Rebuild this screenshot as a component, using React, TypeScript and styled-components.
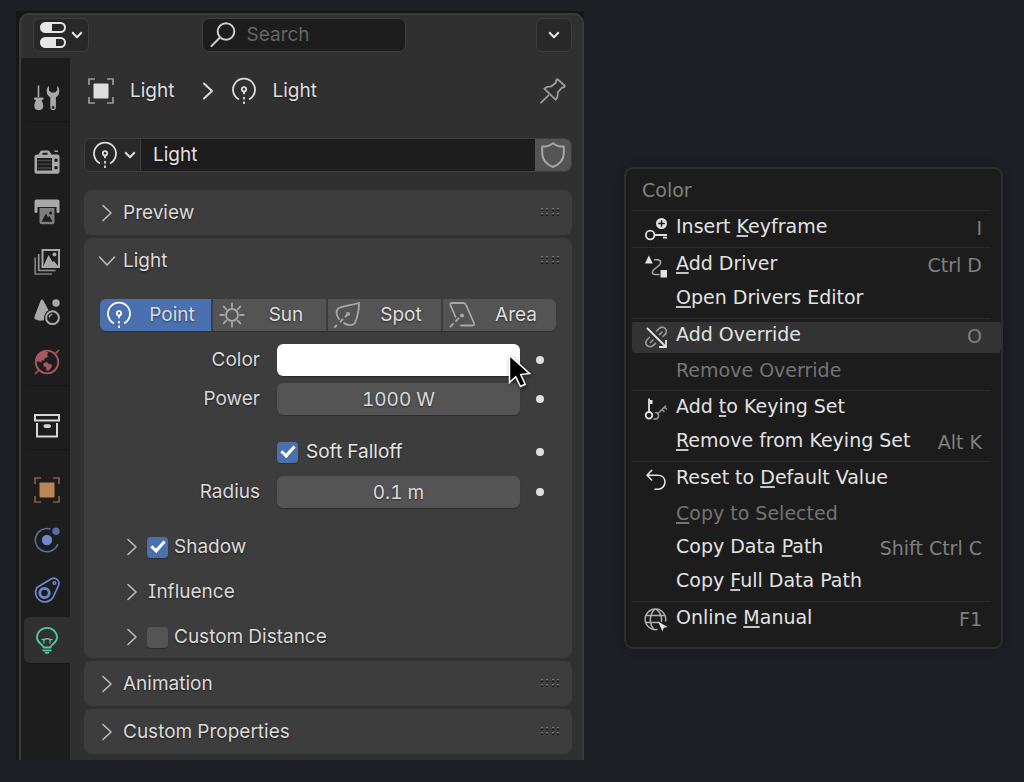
import React from "react";
import styled, { createGlobalStyle, css } from "styled-components";

const GlobalStyle = createGlobalStyle`
  *, *::before, *::after { box-sizing: border-box; }
  body {
    margin: 0;
    background: #1e1f24;
    color: #d9d9d9;
    font: 400 19px/24px Inter, "Liberation Sans", sans-serif;
    font-feature-settings: "cv08", "tnum";
  }
  button, input { font: inherit; font-feature-settings: inherit; color: inherit; margin: 0; }
  svg { display: block; flex: none; overflow: visible; }
`;

/* ---------- icons ---------- */

type IconProps = { w: number; h: number; children: React.ReactNode; sw?: number };

const Icon = ({ w, h, sw = 2, children }: IconProps) => (
  <svg
    width={w}
    height={h}
    viewBox={`0 0 ${w} ${h}`}
    fill="none"
    stroke="currentColor"
    strokeWidth={sw}
    strokeLinecap="round"
    strokeLinejoin="round"
    aria-hidden="true"
  >
    {children}
  </svg>
);

const filled = { fill: "currentColor", stroke: "none" };

const EditorIcon = () => (
  <Icon w={26} h={26}>
    <rect x="1" y="1" width="24" height="9" rx="4.5" />
    <path {...filled} d="M5.500 0.500H12V10.500H5.500A5 5 0 0 1 5.500 0.500Z" />
    <rect x="1" y="16" width="24" height="9" rx="4.5" />
    <path {...filled} d="M5.500 15.500H16V25.500H5.500A5 5 0 0 1 5.500 15.500Z" />
  </Icon>
);
const CaretIcon = () => (
  <Icon w={12} h={8}>
    <path d="M1.200 1.300L6 6.300L10.800 1.300" strokeLinecap="butt" />
  </Icon>
);
const SearchIcon = () => (
  <Icon w={26} h={26}>
    <circle cx="16" cy="9.500" r="8.300" />
    <path d="M10 15.500L1.500 24" />
  </Icon>
);
const RightIcon = ({ sw = 1.6 }: { sw?: number }) => (
  <Icon w={10} h={18} sw={sw}>
    <path d="M1 1.500L9 9L1 16.500" />
  </Icon>
);
const DownIcon = () => (
  <Icon w={16} h={10} sw={1.6}>
    <path d="M0.500 1L8 9L15.500 1" />
  </Icon>
);
const ObjectIcon = ({ frame = "#9a9a9a" }: { frame?: string }) => (
  <Icon w={26} h={26} sw={1.7}>
    <path
      stroke={frame}
      strokeLinecap="butt"
      strokeLinejoin="miter"
      d="M1 7V1H7M19 1H25V7M25 19V25H19M7 25H1V19"
    />
    <rect {...filled} x="5.500" y="5.500" width="15" height="15" rx="1" />
  </Icon>
);
const PointIcon = () => (
  <Icon w={24} h={28} sw={1.8}>
    <path d="M6.300 22A11 11 0 1 1 17.700 22" />
    <circle cx="12" cy="12.300" r="2.200" />
    <path d="M12 15V17.200M12 20V22.500M12 24.500V27" strokeLinecap="butt" />
  </Icon>
);
const SunIcon = () => (
  <Icon w={26} h={26} sw={1.8}>
    <circle cx="13" cy="13" r="6" />
    <path d="M13 5V1.300M13 21V24.700M5 13H1.300M21 13H24.700M7.300 7.300L4.700 4.700M18.700 7.300L21.300 4.700M7.300 18.700L4.700 21.300M18.700 18.700L21.300 21.300" />
  </Icon>
);
const SpotIcon = () => (
  <Icon w={26} h={26} sw={1.8}>
    <path d="M25 1C18 3 10 4 5 6C1.500 8 2 13 5 17M25 1C25 8 23 16 21 21C19 24 13 23.500 10 21" />
    <circle {...filled} cx="14" cy="12" r="2" />
    <path d="M13 13L11.500 14.500M8.500 17.500L6.500 19.500M2.500 23.500L0.800 25" />
  </Icon>
);
const AreaIcon = () => (
  <Icon w={26} h={26} sw={1.8}>
    <path d="M6.500 15L1.500 3C1 1.500 1.500 1 3 1H14C15.500 1 16.500 1.500 17 3L25 21C25.500 23 25 23.500 23 23.500H12" />
    <circle {...filled} cx="13" cy="13.500" r="2" />
    <path d="M9.500 16.500L7 19M4 22L1.500 24.500" />
  </Icon>
);
const PinIcon = () => (
  <Icon w={26} h={26} sw={1.8}>
    <path d="M17.500 1.200L24.700 7.500C24.800 9 23.500 9.500 22 9.600L17.600 14.500C18 18 17.500 20 15.500 21.700L4.300 10.700C6.500 8.500 9 8.300 11.500 8.300L16 4.500C16 3 16.500 1.500 17.500 1.200Z" />
    <path d="M8.500 17.300L1 24.700" />
  </Icon>
);
const ShieldIcon = () => (
  <Icon w={24} h={26}>
    <path d="M12 1.200C9 3.700 5.500 4.600 1.200 4.600V11C1.200 17.500 6 22.500 12 25C18 22.500 22.800 17.500 22.800 11V4.600C18.500 4.600 15 3.700 12 1.200Z" />
  </Icon>
);
const GripIcon = () => (
  <svg width="18" height="9" viewBox="0 0 18 9" aria-hidden="true">
    {[0, 5, 11, 16].map((x) => (
      <React.Fragment key={x}>
        <rect x={x} y="0" width="2" height="1" fill="#777" />
        <rect x={x} y="2" width="2" height="1" fill="#111" />
        <rect x={x} y="5" width="2" height="1" fill="#777" />
        <rect x={x} y="7" width="2" height="1" fill="#111" />
      </React.Fragment>
    ))}
  </svg>
);
const PointerIcon = () => (
  <svg width="24" height="34" viewBox="0 0 24 34" aria-hidden="true">
    <path
      d="M1.500 1.500V28.500L7.700 22.800L12.500 32.500L17.200 30.300L12.700 20.600L21.500 19.500Z"
      fill="#000"
      stroke="#fff"
      strokeWidth="1.500"
    />
  </svg>
);

const ToolIcon = () => (
  <Icon w={26} h={26}>
    <path d="M4.500 0.500V12" strokeWidth="1.600" strokeLinecap="butt" />
    <path {...filled} d="M1 12.500H8.500A1 1 0 0 1 8.500 14.800L7.500 15.500C9 18 9.500 20 9 22.500C8 26 1.500 26 0.500 22.500C0 20 0.500 18 2 15.500L1 14.800A1 1 0 0 1 1 12.500Z" />
    <path
      {...filled}
      fillRule="evenodd"
      d="M15 0.800C11.500 4 12 10 16.300 12.300V22.300A2.800 2.800 0 0 0 21.900 22.300V12.300C26 10 26.500 4 23.200 0.800V5.200L21 7.500H17.200L15 5.200ZM19.100 21A1.400 1.400 0 1 1 19.100 23.800A1.400 1.400 0 1 1 19.100 21Z"
    />
  </Icon>
);
const RenderIcon = () => (
  <Icon w={26} h={24}>
    <path
      {...filled}
      fillRule="evenodd"
      d="M0.500 7Q0.500 4.800 2.500 4.500H4.500L6.500 1.200Q7 0.500 8 0.500H14Q15 0.500 15.500 1.200L17.500 4.500H23.500Q25.500 4.500 25.500 7V22Q25.500 23.700 23.500 23.700H2.500Q0.500 23.700 0.500 22ZM8.500 2.700V4.700H13.500V2.700ZM3 8V20.500H18V8ZM22 8.500A1.800 1.800 0 1 0 22 12.100A1.800 1.800 0 1 0 22 8.500ZM22 16A1.800 1.800 0 1 0 22 19.600A1.800 1.800 0 1 0 22 16Z"
    />
    <path d="M4 10.500H17M4 14.200H17M4 18H17" strokeWidth="1.300" opacity="0.300" />
    <path d="M21 1.200H23.500" strokeWidth="1.400" />
  </Icon>
);
const OutputIcon = () => (
  <Icon w={26} h={26}>
    <path {...filled} d="M2.500 0.500H23.500Q25.500 0.500 25.500 2.500V13Q25.500 14 24 14Q22.500 14 22.500 13V8H3.500V13Q3.500 14 2 14Q0.500 14 0.500 13V2.500Q0.500 0.500 2.500 0.500Z" />
    <g opacity="0.700">
      <path {...filled} fillRule="evenodd" d="M5.500 9H20.500V23.500Q20.500 25.300 18.500 25.300H7.500Q5.500 25.300 5.500 23.500ZM7.500 22.800H18.500L15.500 17L14 18.500L12 14.500ZM16.700 12.500A1.500 1.500 0 1 0 16.700 15.500A1.500 1.500 0 1 0 16.700 12.500Z" />
    </g>
  </Icon>
);
const LayersIcon = () => (
  <Icon w={26} h={26} sw={1.700}>
    <g strokeLinecap="butt" strokeLinejoin="miter">
      <rect x="8.500" y="1" width="16.500" height="17" strokeWidth="2" />
      <path {...filled} d="M9.500 17L14.500 6L18.500 13L20 12L24 17Z" />
      <circle {...filled} cx="20.500" cy="5.500" r="2" />
      <path d="M4.700 5V21.500H21.500" opacity="0.850" />
      <path d="M1.200 8.500V25H18" opacity="0.700" />
    </g>
  </Icon>
);
const SceneIcon = () => (
  <Icon w={26} h={26}>
    <path {...filled} d="M8 0.500Q8.800 0.500 9.300 1.500L14.500 11Q10 14 10 19.500V21.300Q4 22.500 1 20Q0 19 0.500 17.500L6.700 1.500Q7.200 0.500 8 0.500Z" />
    <circle {...filled} cx="22" cy="4" r="3.700" />
    <circle cx="18.500" cy="18.700" r="6.400" />
    <path d="M15.300 17.700Q16 16 17.700 15.600" strokeWidth="1.500" />
  </Icon>
);
const WorldIcon = () => (
  <Icon w={26} h={26}>
    <circle cx="13" cy="13" r="11.300" strokeWidth="1.800" />
    <path d="M21.500 4.500L25 1M4.500 21.500L1 25" strokeLinecap="butt" strokeWidth="1.600" />
    <path {...filled} d="M2 9.500L6 3.700L10.500 1.800L14.300 3.500L13 6L14.500 7.500L10.500 9.500L10 11.500L7.500 11.500L7.500 13.500L5 12.500L2.500 12.500Z" />
    <path {...filled} d="M9.500 14L13 13L14 14.500L17.800 15.500L17.500 18.500L15 21.500L12 21.500L12.500 18.500L9.500 17Z" />
  </Icon>
);
const CollectionIcon = () => (
  <Icon w={26} h={26}>
    <g strokeLinejoin="miter">
      <rect x="1" y="2" width="24" height="5.500" />
      <path d="M3 10V23.500H23V10" strokeLinecap="butt" />
    </g>
    <rect {...filled} x="9.500" y="11.200" width="7.500" height="3.800" rx="1.900" />
  </Icon>
);
const PhysicsIcon = () => (
  <Icon w={26} h={26}>
    <g opacity="0.750">
      <path d="M16 1.900A11.600 11.600 0 1 0 23.700 17.500" strokeWidth="1.600" />
      <circle {...filled} cx="22" cy="4.200" r="3.700" />
    </g>
    <circle {...filled} cx="13" cy="13" r="5.200" />
  </Icon>
);
const ConstraintIcon = () => (
  <Icon w={26} h={26}>
    <path d="M3 10.500L17 2C21.500 -0.500 26.500 4 24.500 8.500L19 20.500A9.300 9.300 0 1 1 3 10.500Z" strokeWidth="1.700" />
    <circle cx="10.500" cy="16" r="4.700" strokeWidth="2.800" />
    <circle cx="20.500" cy="6" r="1.300" strokeWidth="1.500" />
  </Icon>
);
const DataIcon = () => (
  <Icon w={22} h={27}>
    <path d="M7.500 20.500C7 17 1 16.500 1 10.500A10 9.700 0 0 1 21 10.500C21 16.500 15 17 14.500 20.500Z" strokeWidth="1.800" />
    <path d="M8 16V12.500H6M14 16V12.500H16M8 12.500Q11 11 14 12.500" strokeWidth="1.300" />
    <path d="M6.500 23.500H15.500" strokeLinecap="butt" strokeWidth="1.800" />
    <path {...filled} d="M8.500 25H13.500L12.500 26.700H9.500Z" />
  </Icon>
);

const InsertKeyIcon = () => (
  <Icon w={22} h={23} sw={1.800}>
    <circle cx="5.200" cy="17" r="4.300" />
    <path d="M10 17H22M18 19.700H22" strokeLinecap="butt" />
    <circle {...filled} cx="16.500" cy="5.500" r="5.500" />
    <path d="M16.500 2.200V8.800M13.200 5.500H19.800" stroke="#1c1c1c" strokeWidth="1.500" strokeLinecap="butt" />
  </Icon>
);
const DriverIcon = () => (
  <Icon w={22} h={23} sw={1.500}>
    <path {...filled} d="M3.800 0.500L7.800 8.500H0Z" />
    <rect {...filled} x="15.500" y="15" width="6.500" height="7.500" />
    <path opacity="0.700" d="M9.500 4.800H12.500C16.500 5 16 8.500 14.500 10L8.500 15C6.500 17.500 7.500 19.500 10 19.500H14" />
  </Icon>
);
const OverrideIcon = () => (
  <Icon w={22} h={22} sw={1.800}>
    <g opacity="0.550" strokeWidth="1.700">
      <path d="M11.500 5L14.500 2.200Q17.500 0 20.200 2.500Q22.300 5 20.500 8L18 10.300" />
      <path d="M14.500 8.500L17 6.200" />
      <path d="M4.500 11.500L1.800 14Q-0.300 17 2 19.500Q4.500 21.700 7.500 20L10.500 17.500" />
      <path d="M5.500 16.500L8 14" />
    </g>
    <path d="M2 2L20.500 20.500M21 14V21H14" strokeLinecap="butt" strokeLinejoin="miter" />
  </Icon>
);
const KeyingIcon = () => (
  <Icon w={22} h={22} sw={1.800}>
    <circle cx="4" cy="17.300" r="3.300" />
    <path d="M4 14V0.500" strokeLinecap="butt" />
    <path {...filled} d="M4.500 2H7.500V6H4.500Z" />
    <g opacity="0.600" strokeWidth="1.600">
      <path d="M9 21C12 21.500 14 19.500 13.500 17C13 15 11.500 14.500 10.500 14.700" />
      <path d="M13 15.500L20.500 8M17 11.500L19 13.500M19.500 9L21.500 11" />
    </g>
  </Icon>
);
const ResetIcon = () => (
  <Icon w={22} h={22} sw={1.600}>
    <path d="M6.700 1.300L2 6.300L6.700 11M2 6.300H12.500C17.500 6.300 20 9.500 20 13C20 17 17 20.200 13 20.200H10" />
  </Icon>
);
const GlobeIcon = () => (
  <Icon w={22} h={22} sw={1.500}>
    <g opacity="0.750">
      <path d="M20.600 12A10.300 10.300 0 1 0 12 20.500" />
      <path d="M9.500 0.500C4 6 4 15 9 20.500M11.500 0.500C16 4 17 8 16.500 12.500M1.500 6.500H19.500M1 13.500H14" />
    </g>
    <path {...filled} d="M13 12.500L22.500 18L18.700 18.800L17.500 22.500Z" />
  </Icon>
);

/* ---------- page ---------- */

const Page = styled.main`
  display: grid;
  grid-template-columns: minmax(0, 568fr) minmax(0, 379fr);
  gap: 40px;
  align-items: start;
  min-height: 100vh;
  padding: 11px 21px 22px 16px;
`;

const Backdrop = styled.div`
  padding: 2px 0 0 3px;
  background: linear-gradient(90deg, #16171a, #161616 3px);
`;

const EditorWindow = styled.section`
  border: 2px solid #3b3b3b;
  border-bottom: 0;
  border-radius: 10px 10px 0 0;
  background: #303030;
  overflow: hidden;
`;

const Header = styled.header`
  display: flex;
  align-items: flex-start;
  height: 43px;
  padding: 3px 10px 0 12px;
`;

const Spacer = styled.span<{ $grow: number }>`
  flex: ${(p) => p.$grow} 1 0;
`;

const control = css`
  height: 34px;
  border: 1px solid #3e3e3e;
  border-radius: 7px;
  background: #282828;
`;

const HeaderButton = styled.button<{ $width: number }>`
  ${control}
  display: flex;
  align-items: center;
  justify-content: center;
  gap: 5px;
  width: ${(p) => p.$width}px;
  padding: 0;
  color: #e6e6e6;
`;

const SearchBox = styled.label`
  ${control}
  display: flex;
  align-items: center;
  gap: 11px;
  width: 204px;
  padding: 0 7px;
  background: #1d1d1d;
  color: #cfcfcf;
`;

const SearchInput = styled.input`
  flex: 1;
  min-width: 0;
  padding: 0;
  border: 0;
  outline: 0;
  background: none;
  &::placeholder { color: #666; opacity: 1; }
`;

const Body = styled.div`
  display: flex;
`;

const Rail = styled.nav`
  display: flex;
  flex-direction: column;
  gap: 18px;
  width: 49px;
  padding: 17px 0 0 3px;
  background: #1d1d1d;
`;

const TabGroup = styled.div`
  display: flex;
  flex-direction: column;
  gap: 4px;
  border-radius: 6px 0 0 6px;
  box-shadow: 0 2px 1px -1px #181818;
`;

const Tab = styled.button<{ $color?: string; $active?: boolean }>`
  display: flex;
  align-items: center;
  justify-content: center;
  height: 46px;
  padding: 0;
  border: 0;
  border-radius: 6px 0 0 6px;
  background: ${(p) => (p.$active ? "#303030" : "none")};
  color: ${(p) => p.$color ?? "#a8a8a8"};
`;

const Content = styled.div`
  flex: 1;
  min-width: 0;
  padding: 0 10px 6px 14px;
  text-shadow: 0 1px 2px rgba(0, 0, 0, 0.5);
`;

const Breadcrumb = styled.div`
  display: flex;
  align-items: center;
  height: 65px;
  padding: 0 6px 0 4px;
`;

const Crumb = styled.span`
  display: flex;
  align-items: center;
  gap: 16px;
  color: #dedede;
`;

const CrumbArrow = styled.span`
  padding: 0 19px 0 29px;
`;

const PlainButton = styled.button`
  margin-left: auto;
  padding: 0;
  border: 0;
  background: none;
  color: #9c9c9c;
`;

const DataBlock = styled.div`
  display: flex;
  height: 34px;
  margin: 15px 0 18px;
  border: 1px solid #3e3e3e;
  border-radius: 7px;
  overflow: hidden;
`;

const DataType = styled.button`
  display: flex;
  align-items: center;
  gap: 7px;
  width: 56px;
  padding: 0 0 0 8px;
  border: 0;
  border-right: 1px solid #3e3e3e;
  background: #282828;
  color: #dedede;
`;

const NameInput = styled.input`
  flex: 1;
  min-width: 0;
  padding: 0 12px;
  border: 0;
  outline: 0;
  background: #1d1d1d;
  color: #e2e2e2;
  text-shadow: inherit;
`;

const ShieldButton = styled.button`
  display: flex;
  align-items: center;
  justify-content: center;
  width: 36px;
  padding: 0;
  border: 0;
  background: #545454;
  color: #a6a6a6;
`;

const Stack = styled.div`
  display: flex;
  flex-direction: column;
  gap: 3px;
`;

const Panel = styled.section`
  border-radius: 8px;
  background: #3d3d3d;
`;

const PanelHeader = styled.button`
  display: flex;
  align-items: center;
  width: 100%;
  height: 45px;
  padding: 0 13px 0 15px;
  border: 0;
  background: none;
  text-align: left;
  text-shadow: inherit;
`;

const PanelTitle = styled.span`
  flex: 1;
  padding-left: 8px;
`;

const ChevronSlot = styled.span`
  display: flex;
  justify-content: center;
  width: 16px;
  color: #bdbdbd;
`;

const PanelBody = styled.div`
  padding: 16px 16px 1px;
`;

const Segments = styled.div`
  display: grid;
  grid-template-columns: 111fr 113fr 113fr 113fr;
  gap: 2px;
  height: 32px;
  border-radius: 6px;
  overflow: hidden;
  margin-bottom: 13px;
  box-shadow: 0 1px 1px rgba(0, 0, 0, 0.25);
`;

const Segment = styled.label`
  display: flex;
  align-items: center;
  min-width: 0;
  padding: 0 6px;
  background: #545454;
  color: #a8a8a8;
  &:has(input:checked) { background: #4b70b0; color: #fff; }
`;

const SegmentRadio = styled.input`
  appearance: none;
  width: 0;
  height: 0;
`;

const SegmentIcon = styled.span`
  display: flex;
  justify-content: center;
  width: 26px;
`;

const SegmentText = styled.span`
  flex: 1;
  padding-left: 7px;
  text-align: center;
  color: #dcdcdc;
`;

const Fields = styled.div`
  display: grid;
  grid-template-columns: minmax(0, 160fr) minmax(0, 243fr) 19px;
  column-gap: 17px;
  row-gap: 7px;
  padding-bottom: 19px;
`;

const FieldLabel = styled.label`
  align-self: center;
  text-align: right;
`;

const fieldBox = css`
  width: 100%;
  height: 32px;
  border: 0;
  border-radius: 6px;
  box-shadow: 0 1px 1px rgba(0, 0, 0, 0.3);
`;

const ColorField = styled.input`
  ${fieldBox}
  display: block;
  appearance: none;
  padding: 0;
  background: none;
  &::-webkit-color-swatch-wrapper { padding: 0; }
  &::-webkit-color-swatch { border: 0; border-radius: 5px; }
`;

const ColorCell = styled.div`
  position: relative;
`;

const Pointer = styled.span`
  position: absolute;
  top: 10px;
  right: -12px;
  filter: drop-shadow(1px 2px 2px rgba(0, 0, 0, 0.4));
`;

const ValueField = styled.input`
  ${fieldBox}
  padding: 0;
  background: #545454;
  text-align: center;
  text-shadow: inherit;
`;

const SoftRow = styled.label`
  display: flex;
  grid-column: 2;
  align-items: center;
  gap: 8px;
  height: 32px;
  margin: 14px 0 1px;
  color: #e6e6e6;
`;

const KeyDot = styled.button<{ $soft?: boolean }>`
  grid-column: 3;
  align-self: center;
  width: 8px;
  height: 8px;
  margin: ${(p) => (p.$soft ? "13px 0 0 -1px" : "0 0 0 -1px")};
  padding: 0;
  border: 0;
  border-radius: 50%;
  background: #e0e0e0;
`;

const Check = styled.input`
  display: flex;
  flex: none;
  align-items: center;
  justify-content: center;
  appearance: none;
  width: 21px;
  height: 21px;
  border-radius: 4px;
  background: #545454;
  box-shadow: 0 1px 1px rgba(0, 0, 0, 0.25);
  &:checked { background: #4b70b0; }
  &:checked::after {
    content: "";
    width: 8px;
    height: 14px;
    margin-bottom: 4px;
    border: solid #fff;
    border-width: 0 3px 3px 0;
    transform: rotate(42deg);
  }
`;

const SubPanels = styled.div`
  display: flex;
  flex-direction: column;
  gap: 5px;
  padding-left: 24px;
`;

const SubPanel = styled.div`
  display: flex;
  align-items: center;
  gap: 7px;
  height: 40px;
`;

const SubToggle = styled.button`
  display: flex;
  align-items: center;
  gap: 8px;
  padding: 0;
  border: 0;
  background: none;
  text-shadow: inherit;
`;

const CheckLabel = styled.label`
  display: flex;
  align-items: center;
  gap: 6px;
`;

/* ---------- context menu ---------- */

const Menu = styled.div`
  margin-top: 156px;
  padding: 0 0 10px 6px;
  border: 2px solid #2e2e2e;
  border-radius: 9px;
  background: #1c1c1c;
  color: #e2e2e2;
  font: 400 19px/24px "DejaVu Sans", sans-serif;
  box-shadow: 0 0 10px rgba(0, 0, 0, 0.25);
`;

const MenuTitle = styled.div`
  height: 40px;
  padding: 9px 10px 7px;
  color: #808080;
`;

const MenuSeparator = styled.hr`
  height: 1px;
  margin: 1px 11px 1px 0;
  border: 0;
  background: #2a2a2a;
`;

const MenuItem = styled.button<{ $active?: boolean }>`
  display: flex;
  align-items: center;
  width: 100%;
  height: ${(p) => (p.disabled ? 35 : 34)}px;
  padding: 0 19px 0 13px;
  border: 0;
  border-radius: 5px;
  background: ${(p) => (p.$active ? "linear-gradient(#333, #333) center / 100% 31px no-repeat" : "none")};
  color: ${(p) => (p.disabled ? "#747474" : "inherit")};
  text-align: left;
  white-space: nowrap;
`;

const MenuIcon = styled.span`
  width: 31px;
`;

const MenuText = styled.span<{ $raised?: boolean }>`
  flex: 1;
  padding-bottom: ${(p) => (p.$raised ? 6 : 3)}px;
`;

const Mnemonic = styled.span`
  text-decoration: underline;
  text-decoration-color: #c4c4c4;
  text-decoration-thickness: 2px;
  text-underline-offset: 2px;
  text-decoration-skip-ink: none;
  button:disabled & { text-decoration-color: #747474; }
`;

const Shortcut = styled.kbd`
  padding-bottom: 3px;
  color: #808080;
  font: inherit;
`;

const railGroups = [
  [{ name: "Tool", icon: <ToolIcon /> }],
  [
    { name: "Render", icon: <RenderIcon /> },
    { name: "Output", icon: <OutputIcon /> },
    { name: "View Layer", icon: <LayersIcon /> },
    { name: "Scene", icon: <SceneIcon /> },
    { name: "World", icon: <WorldIcon />, color: "#a6595d" },
  ],
  [{ name: "Collection", icon: <CollectionIcon />, color: "#d6d6d6" }],
  [
    { name: "Object", icon: <ObjectIcon frame="#86603f" />, color: "#bb8655" },
    { name: "Physics", icon: <PhysicsIcon />, color: "#6c88cf" },
    { name: "Constraints", icon: <ConstraintIcon />, color: "#6c88cf" },
    { name: "Data", icon: <DataIcon />, color: "#53c79b", active: true },
  ],
] as { name: string; icon: React.ReactNode; color?: string; active?: boolean }[][];

const lightTypes = [
  { name: "Point", icon: <PointIcon /> },
  { name: "Sun", icon: <SunIcon /> },
  { name: "Spot", icon: <SpotIcon /> },
  { name: "Area", icon: <AreaIcon /> },
];

/* An underscore precedes the letter that is underlined as the item's mnemonic. */
type Item = { text: string; icon?: React.ReactNode; keys?: string; disabled?: boolean; active?: boolean };

const menuGroups: Item[][] = [
  [{ text: "Insert _Keyframe", icon: <InsertKeyIcon />, keys: "I" }],
  [{ text: "_Add Driver", icon: <DriverIcon />, keys: "Ctrl D" }, { text: "_Open Drivers Editor" }],
  [
    { text: "Add Override", icon: <OverrideIcon />, keys: "O", active: true },
    { text: "Remove Override", disabled: true },
  ],
  [
    { text: "Add _to Keying Set", icon: <KeyingIcon /> },
    { text: "_Remove from Keying Set", keys: "Alt K" },
  ],
  [
    { text: "Reset to _Default Value", icon: <ResetIcon /> },
    { text: "_Copy to Selected", disabled: true },
    { text: "Copy Data _Path", keys: "Shift Ctrl C" },
    { text: "Copy _Full Data Path" },
  ],
  [{ text: "Online _Manual", icon: <GlobeIcon />, keys: "F1" }],
];

const Label = ({ text }: { text: string }) => {
  const at = text.indexOf("_");
  if (at < 0) return <>{text}</>;
  return (
    <>
      {text.slice(0, at)}
      <Mnemonic>{text[at + 1]}</Mnemonic>
      {text.slice(at + 2)}
    </>
  );
};

const Collapsed = ({ title }: { title: string }) => (
  <Panel>
    <PanelHeader aria-expanded={false}>
      <ChevronSlot><RightIcon /></ChevronSlot>
      <PanelTitle>{title}</PanelTitle>
      <GripIcon />
    </PanelHeader>
  </Panel>
);

const SubHeader = ({ title, checked }: { title: string; checked?: boolean }) => (
  <SubPanel>
    {checked === undefined ? (
      <SubToggle aria-expanded={false}>
        <ChevronSlot><RightIcon /></ChevronSlot>
        {title}
      </SubToggle>
    ) : (
      <>
        <SubToggle aria-expanded={false} aria-label={`Expand ${title}`}>
          <ChevronSlot><RightIcon /></ChevronSlot>
        </SubToggle>
        <CheckLabel>
          <Check type="checkbox" defaultChecked={checked} />
          {title}
        </CheckLabel>
      </>
    )}
  </SubPanel>
);

export default function App() {
  return (
    <>
      <GlobalStyle />
      <Page>
        <Backdrop>
          <EditorWindow>
            <Header>
              <HeaderButton $width={56} aria-label="Editor type">
                <EditorIcon />
                <CaretIcon />
              </HeaderButton>
              <Spacer $grow={113} />
              <SearchBox>
                <SearchIcon />
                <SearchInput type="text" placeholder="Search" aria-label="Search" />
              </SearchBox>
              <Spacer $grow={131} />
              <HeaderButton $width={36} aria-label="Options">
                <CaretIcon />
              </HeaderButton>
            </Header>
            <Body>
              <Rail aria-label="Properties">
                {railGroups.map((group, i) => (
                  <TabGroup key={i}>
                    {group.map((t) => (
                      <Tab key={t.name} aria-label={t.name} $color={t.color} $active={t.active}>
                        {t.icon}
                      </Tab>
                    ))}
                  </TabGroup>
                ))}
              </Rail>
              <Content>
                <Breadcrumb>
                  <Crumb><ObjectIcon />Light</Crumb>
                  <CrumbArrow><RightIcon sw={2} /></CrumbArrow>
                  <Crumb><PointIcon />Light</Crumb>
                  <PlainButton aria-label="Pin"><PinIcon /></PlainButton>
                </Breadcrumb>
                <DataBlock>
                  <DataType aria-label="Browse light data">
                    <PointIcon />
                    <CaretIcon />
                  </DataType>
                  <NameInput type="text" defaultValue="Light" aria-label="Name" />
                  <ShieldButton aria-label="Fake user"><ShieldIcon /></ShieldButton>
                </DataBlock>
                <Stack>
                  <Collapsed title="Preview" />
                  <Panel>
                    <PanelHeader aria-expanded>
                      <ChevronSlot><DownIcon /></ChevronSlot>
                      <PanelTitle>Light</PanelTitle>
                      <GripIcon />
                    </PanelHeader>
                    <PanelBody>
                      <Segments>
                        {lightTypes.map((t, i) => (
                          <Segment key={t.name}>
                            <SegmentRadio type="radio" name="type" defaultChecked={i === 0} />
                            <SegmentIcon>{t.icon}</SegmentIcon>
                            <SegmentText>{t.name}</SegmentText>
                          </Segment>
                        ))}
                      </Segments>
                      <Fields>
                        <FieldLabel htmlFor="color">Color</FieldLabel>
                        <ColorCell>
                          <ColorField id="color" type="color" defaultValue="#ffffff" />
                          <Pointer><PointerIcon /></Pointer>
                        </ColorCell>
                        <KeyDot aria-label="Animate color" />
                        <FieldLabel htmlFor="power">Power</FieldLabel>
                        <ValueField id="power" type="text" defaultValue="1000 W" />
                        <KeyDot aria-label="Animate power" />
                        <SoftRow>
                          <Check type="checkbox" defaultChecked />
                          Soft Falloff
                        </SoftRow>
                        <KeyDot $soft aria-label="Animate soft falloff" />
                        <FieldLabel htmlFor="radius">Radius</FieldLabel>
                        <ValueField id="radius" type="text" defaultValue="0.1 m" />
                        <KeyDot aria-label="Animate radius" />
                      </Fields>
                      <SubPanels>
                        <SubHeader title="Shadow" checked />
                        <SubHeader title="Influence" />
                        <SubHeader title="Custom Distance" checked={false} />
                      </SubPanels>
                    </PanelBody>
                  </Panel>
                  <Collapsed title="Animation" />
                  <Collapsed title="Custom Properties" />
                </Stack>
              </Content>
            </Body>
          </EditorWindow>
        </Backdrop>
        <Menu>
          <MenuTitle>Color</MenuTitle>
          {menuGroups.map((group, i) => (
            <React.Fragment key={i}>
              <MenuSeparator />
              {group.map((item) => (
                <MenuItem key={item.text} disabled={item.disabled} $active={item.active}>
                  <MenuIcon>{item.icon}</MenuIcon>
                  <MenuText $raised={!item.disabled}><Label text={item.text} /></MenuText>
                  {item.keys && <Shortcut>{item.keys}</Shortcut>}
                </MenuItem>
              ))}
            </React.Fragment>
          ))}
        </Menu>
      </Page>
    </>
  );
}
